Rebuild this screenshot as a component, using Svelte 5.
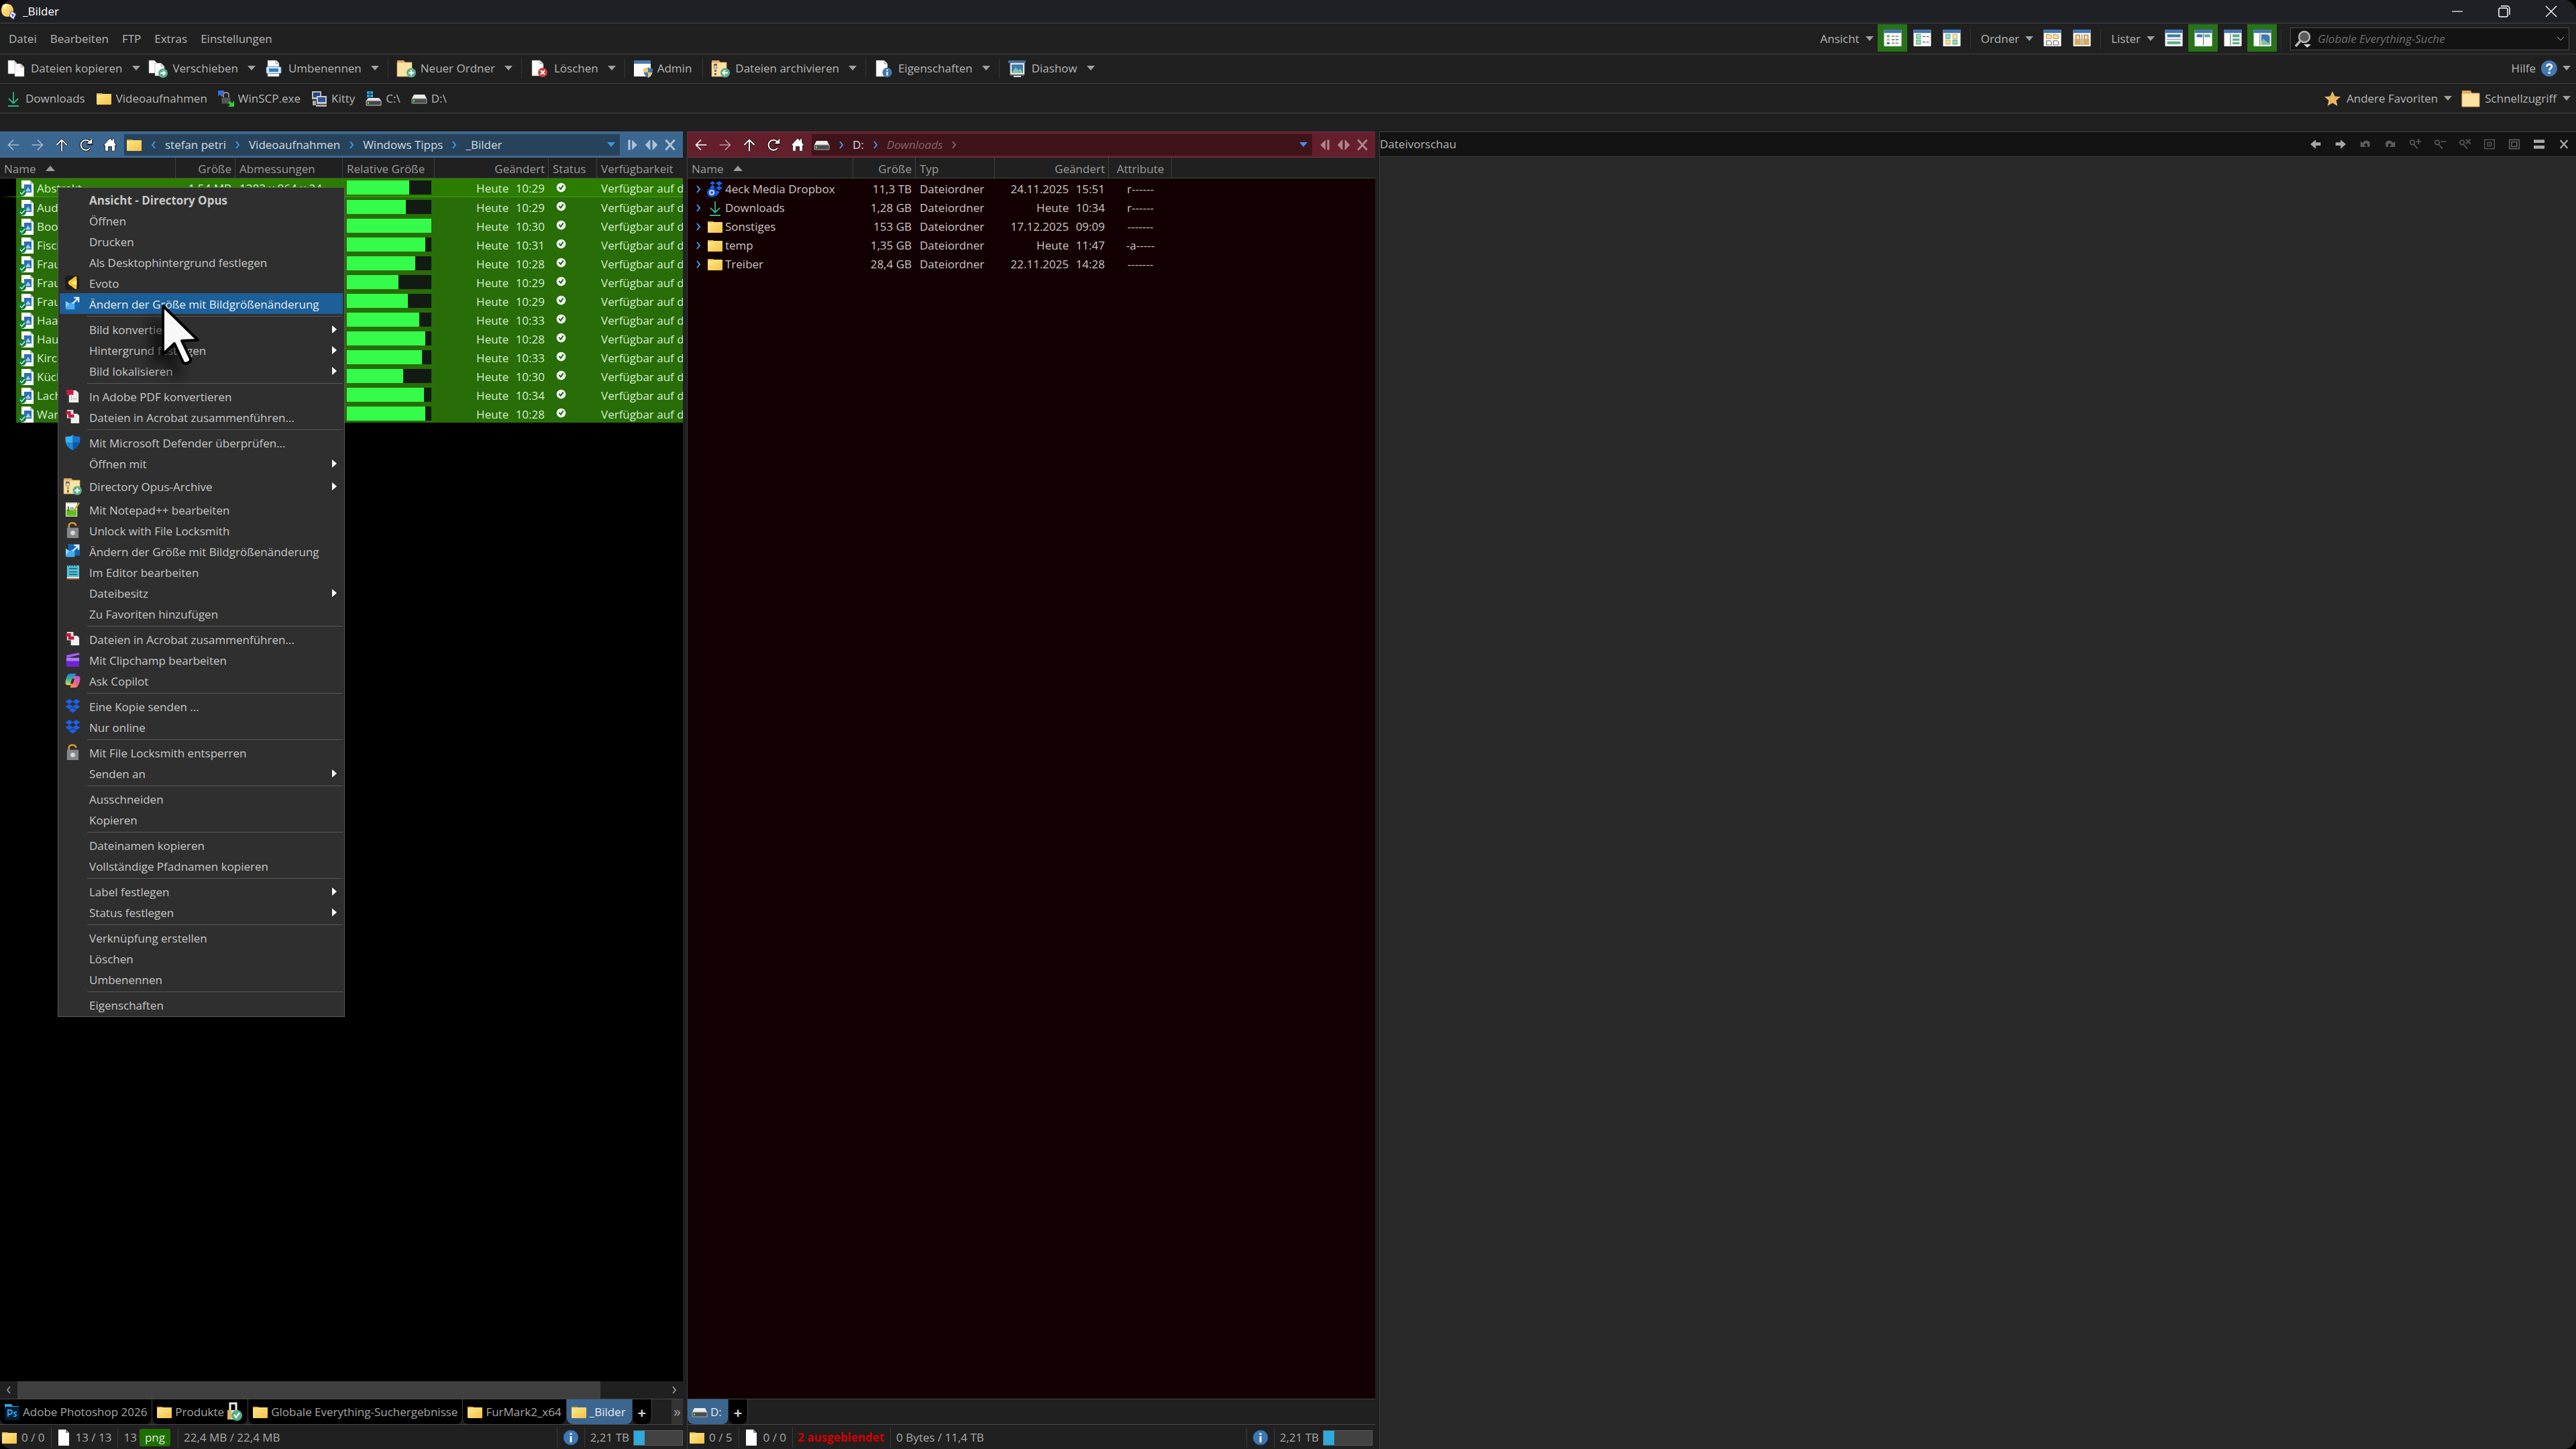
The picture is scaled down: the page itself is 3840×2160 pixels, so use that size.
<script lang="ts">
	type MenuEntry = { label: string; icon?: string; sub?: boolean; bold?: boolean; active?: boolean; tall?: boolean };
	type Tool = { label: string; icon: string; caret?: boolean; sep?: boolean };

	const page = 'fill="#fdfdfd" stroke="#8a8a8a" stroke-width=".5"';

	const icons: Record<string, string> = {
		opus: '<path d="M11 1c6 0 9 5 9 10s-3 9-9 9S2 15 2 10 5 1 11 1z" fill="url(#gold)"/><path d="M3 4c2-3 6-4 9-3L8 9z" fill="#fff2b0"/><path d="M17 11l7 5-4 8-6-5z" fill="#e8e6f6" stroke="#5b51a6"/><path d="M17 15l4 2-2 4z" fill="#5b51a6"/>',
		copy: `<path d="M0 0h9l4 4v16H0z" ${page}/><path d="M9 0v4h4" fill="#ccc"/><path d="M10 5h9l5 5v14H10z" ${page}/><path d="M19 5v5h5" fill="#ddd" stroke="#888" stroke-width=".6"/>`,
		move: `<path d="M-1 0h8l4 4v15H-1z" ${page}/><path d="M8 4h9l5 5v14H8z" ${page}/><path d="M17 4v5h5" fill="#ddd" stroke="#888" stroke-width=".6"/><circle cx="20" cy="19" r="7" fill="#5fae8b"/><path d="M16 19h7M20 16l3 3-3 3" fill="none" stroke="#fff" stroke-width="2"/>`,
		rename: `<path d="M3 0h13l4 4v20H3z" ${page}/><path d="M15 0v5h5" fill="#ddd" stroke="#777" stroke-width=".6"/><rect x="1" y="9.500" width="22" height="10" rx="1.500" fill="#d6ebfa" stroke="#5d8fb8"/><rect x="5" y="12" width="14" height="5" fill="#3f7aae"/>`,
		newfolder: '<path d="M-1 0h10l2 3h-12z" fill="#d9ab67"/><path d="M-1 3h22v21H-1z" fill="#fbe2a0" stroke="#d9ab67" stroke-width=".8"/><circle cx="20" cy="18.500" r="7" fill="#5fae8b"/><path d="M20 14.500v8M16 18.500h8" stroke="#fff" stroke-width="2.200"/>',
		remove: `<path d="M1 0h12l5 5v18H1z" ${page}/><path d="M13 0v5h5" fill="#ddd" stroke="#777" stroke-width=".6"/><circle cx="17" cy="18" r="7" fill="#c73f37"/><path d="M14 15l6 6M20 15l-6 6" stroke="#fff" stroke-width="2.200"/>`,
		admin: '<path d="M-1 0h25v24H-1z" fill="#fbfbfb"/><path d="M-1 0h25v5H-1z" fill="#4a7bb0"/><path d="M20 10c2 2 4 2 7 2 0 7-2 11-7 14-5-3-7-7-7-14 3 0 5 0 7-2z" fill="#3f78b5"/><path d="M20 10v8h-7c0-2 0-4 0-6 3 0 5 0 7-2zM20 18h6.500c-1 4-3 6-6.500 8z" fill="#efc56a"/>',
		archive: '<path d="M-1 0h11l2 3H-1z" fill="#d9ab67"/><path d="M-1 3h22v21H-1z" fill="#fbe2a0" stroke="#d9ab67" stroke-width=".8"/><path d="M2 5h5v7H2zM3 14h3v3H3zM3 19h3v3H3z" fill="#6c6456"/><path d="M3 8h3v3H3z" fill="#fff"/><circle cx="19" cy="18.500" r="7" fill="#5fae8b"/><path d="M23 18.500h-7M19 15l-3.500 3.500L19 22" fill="none" stroke="#fff" stroke-width="2"/>',
		archiveplus: '<path d="M-2 -1h12l2 3H-2z" fill="#d9ab67"/><path d="M-2 2h25v21H-2z" fill="#fbe2a0" stroke="#d9ab67" stroke-width=".8"/><path d="M1 4h6v7H1zM3 13h3v2H3zM3 17h3v4H3z" fill="#6c6456"/><path d="M2 7h4v3H2z" fill="#fff"/><circle cx="19" cy="18" r="7" fill="#5fae8b"/><path d="M19 14v8M15 18h8" stroke="#fff" stroke-width="2"/>',
		props: `<path d="M1 0h12l5 5v19H1z" ${page}/><path d="M13 0v5h5" fill="#ddd" stroke="#777" stroke-width=".6"/><circle cx="17.500" cy="18" r="7.200" fill="#4577b0"/><path d="M17.500 13.500v2M17.500 17v5.500" stroke="#fff" stroke-width="2.200"/>`,
		show: '<path d="M-1 0h26v4H-1z" fill="#3f6f9f"/><path d="M2 4h21v17H2z" fill="#fff" stroke="#9a9a9a"/><path d="M4 6h17v13H4z" fill="#3f7aae"/><path d="M4 19l6-9 4 5 3-3 4 7z" fill="#7fc4a3"/><path d="M2 21h21v2H2z" fill="#666"/><path d="M7 23h11v2H7z" fill="#ddd"/>',
		down: '<path d="M12 2v17M5 12l7 7 7-7" fill="none" stroke="#35b385" stroke-width="1.800"/><path d="M4 23h16" stroke="#35b385" stroke-width="2"/>',
		folder: '<path d="M1 4h8l2 2h12v3H1z" fill="#e0b53a"/><path d="M1 6h7l2-1h13v15a1 1 0 0 1-1 1H2a1 1 0 0 1-1-1z" fill="url(#gold)"/>',
		winscp: '<path d="M0 0h9v3L6 5l2 3-3 1-2-3-3 3z" fill="#3470d8"/><rect x="5" y="10" width="14" height="10" rx="1" fill="#555" stroke="#222"/><path d="M8 10V6c0-4 8-4 8 0v4" fill="none" stroke="#8b8b8b" stroke-width="2"/><path d="M24 15v9h-9l3-3-3-3 3-2 3 3z" fill="#2fd535"/>',
		kitty: '<rect x="1" y="1" width="14" height="12" fill="#b9bcc0"/><rect x="3" y="3" width="10" height="7" fill="#27437b"/><rect x="8" y="8" width="15" height="12" fill="#c6c9cd"/><rect x="10" y="10" width="11" height="7" fill="#2f5596"/><path d="M2 15h5v7H2zM7 21h16v3H7z" fill="#aaa"/>',
		cdrive: '<path d="M2 1h4v4H2zM7 1h4v4H7zM2 6h4v4H2zM7 6h4v4H7z" fill="#27a3e6"/><path d="M4 11h16l3 4H1z" fill="#e4e4e4"/><path d="M1 15h22v7H1z" fill="#474747" stroke="#c9c9c9"/><path d="M4 17v3" stroke="#4be04b" stroke-width="2"/>',
		drive: '<path d="M4 6h16l3 6H1z" fill="#ebebeb"/><path d="M1 12h22v7H1z" fill="#4a4f4a" stroke="#a9a9a9"/><path d="M4 14v3" stroke="#4be04b" stroke-width="2"/>',
		star: '<path d="M12 1l3.500 7.500 8.500.8-6.400 5.500L19.500 23 12 18.500 4.500 23l1.900-8.200L0 9.300l8.500-.8z" fill="#e6b562"/>',
		quick: '<path d="M-1 0h13l2 4H-1z" fill="#dca95c"/><path d="M-1 4h26v20H-1z" fill="#fde3a2" stroke="#dca95c"/>',
		help: '<circle cx="12" cy="12" r="12" fill="#4577b0"/><path d="M8.500 9.500c0-5 7.500-4.500 7.500-.5 0 3-3.800 2.800-3.800 6" fill="none" stroke="#fff" stroke-width="2.600"/><circle cx="12.200" cy="18.300" r="1.700" fill="#fff"/>',
		info: '<circle cx="12" cy="12" r="11" fill="#3f76b4" stroke="#27598f"/><circle cx="12" cy="6.500" r="1.600" fill="#fff"/><path d="M12 10v9" stroke="#fff" stroke-width="2.800"/>',
		png: '<path d="M4 0h13l5 5v19H4z" fill="#fff"/><path d="M17 0v5h5" fill="#bbb"/><path d="M8 6h11v12H8z" fill="#2d6fb5"/><path d="M9 17l5-7 4 6z" fill="#9fd0ef"/><circle cx="5" cy="17.500" r="6" fill="#157a3c"/><path d="M2 18l2.500 2.500L9 15" fill="none" stroke="#c9f5d6" stroke-width="1.500"/>',
		doc: '<path d="M4 0h11l5 5v19H4z" fill="#fff"/><path d="M15 0v5h5" fill="#8c8c8c"/>',
		ok: '<circle cx="12" cy="12" r="11" fill="#f2fbf0"/><path d="M7 11l4 5 6-9" fill="none" stroke="#1d5c14" stroke-width="3"/>',
		dropbox: '<path d="M6.500 1l6 4-6 4-6-4zM17.500 1l6 4-6 4-6-4zM6.500 9l6 4-6 4-6-4zM17.500 9l6 4-6 4-6-4zM12 14.500l6 4-6 4-6-4z" fill="#1a62ea"/>',
		dbfolder: '<path d="M8 0l4 3-4 3-4-3zM18 0l5 3-5 4-5-4zM18 7l5 3-5 4-5-4zM8 6l4 3-4 3-4-3z" fill="#1a62ea"/><circle cx="7" cy="17" r="7" fill="#1a57d6"/><path d="M14 14l5 2-6 7z" fill="#1a62ea"/><circle cx="7" cy="17" r="3" fill="none" stroke="#fff" stroke-width="1.500"/>',
		evoto: '<rect x="0" y="1" width="22" height="22" rx="4" fill="#1d1d1d"/><path d="M18 2v20c-3 0-5-2-7-4-3-2-6-3-6-6s3-4 6-6c2-2 4-4 7-4z" fill="#f8c726"/><path d="M18 8l-8 4 8 4z" fill="#fff0a8"/>',
		resize: '<path d="M5 1h18v18H5z" fill="#1464b4"/><path d="M1 8l6 4 4-3 4 4v8H2l-1-1z" fill="#46aef0"/><path d="M1 8l6 4-6 6z" fill="#8fd2fb"/><path d="M12 12l8-8M14 3h7v7" fill="none" stroke="#e8f4ff" stroke-width="2.400"/>',
		pdf: '<path d="M6 3h11l4 4v15H6z" fill="#eee"/><path d="M2 2h11v8H2z" fill="#c81845"/><path d="M10 12v6M12 16h6" stroke="#aaa"/>',
		merge: '<path d="M3 1h10v13H3z" fill="#ddd"/><path d="M9 7h10l3 3v12H9z" fill="#f1f1f1"/><path d="M1 3h8v5H1zM5 8h9v5H5z" fill="#bf1b42"/>',
		defender: '<path d="M12 0c3 3 7 3 11.500 3 .5 11-3 17-11.500 21z" fill="#1b75cc"/><path d="M12 0v24C3.500 20 0 14 .500 3 5 3 9 3 12 0z" fill="#38b4ee"/><path d="M12 12h10.700C21 18 17.500 21.500 12 24z" fill="#0d57a6"/><path d="M12 12H1.300C3 18 6.500 21.500 12 24z" fill="#1d8ad9"/>',
		npp: '<path d="M1 1h18v22H1z" fill="#f4f9ee"/><path d="M2 12h16v10H2z" fill="#62bd22"/><path d="M3 2h15" stroke="#888" stroke-dasharray="2 1"/><path d="M5 7v7M8 10h2M11 10h2" stroke="#333" stroke-width="1.500"/><path d="M21 1l2 1-8 13-2 1v-3z" fill="#c9a23c"/>',
		unlock: '<path d="M6 8V5c0-6 10-6 11 0" fill="none" stroke="#d99a2c" stroke-width="2.800"/><rect x="3" y="8" width="18" height="16" fill="#85888b"/><circle cx="12" cy="16" r="3.500" fill="#d7dadd"/>',
		editor: '<path d="M3 2h19v20H3z" fill="#5ac6d8"/><path d="M3 22h19v2H3z" fill="#a8582c"/><path d="M3 20h19v2H3z" fill="#eee"/><path d="M5 1v3M9 1v3M13 1v3M17 1v3" stroke="#1d5d72" stroke-width="1.500"/><path d="M6 7h13M6 12h13M6 16h13" stroke="#17677d" stroke-width="1.800"/>',
		clip: '<path d="M2 5l19-4 2 3-20 5z" fill="#a45df4"/><path d="M2 9h20v13a2 2 0 0 1-2 1H3l-1-2z" fill="#6d24d6"/><path d="M2 9h20v5H2z" fill="#b07bf8"/>',
		copilot: '<path d="M9 1h8l-6 18H4c-4 0-4-4-3-8C3 5 4 1 9 1z" fill="url(#cool)"/><path d="M15 23H8l6-18h6c4 0 4 4 3 8-2 6-3 10-8 10z" fill="url(#warm)"/><path d="M11 9h4l-3 8H8z" fill="#303030"/>',
		ps: '<path d="M1 0h10l2 3h9v4H1z" fill="#35a0e2"/><rect x="1" y="4" width="22" height="20" rx="2" fill="#001e36"/><path d="M6 19V9h3a3 3 0 0 1 0 6H6M19 12c-5-1-5 2-2.500 3s2.500 4-2.500 3" fill="none" stroke="#31a8ff" stroke-width="1.800"/>',
		lock: '<path d="M5 9V-1h9v10" fill="none" stroke="#eee" stroke-width="3"/><rect x="1" y="9" width="16" height="14" fill="#f3efe2"/><path d="M1 9h6v14H1z" fill="#e1b15b"/><circle cx="15" cy="17" r="8" fill="#53b188"/><path d="M11 16l3 4 5-7" fill="none" stroke="#fff" stroke-width="2.200"/>',
		v1: '<path d="M4 8h4v3H4z" fill="#5fae8b"/><path d="M4 13h4v3H4z" fill="#d3b568"/><path d="M4 18h4v3H4z" fill="#3f76ae"/><path d="M11 9.500h10M11 14.500h10M11 19.500h10" stroke="#444" stroke-dasharray="4 1.500"/>',
		v2: '<path d="M4 7h6v6H4zM4 15h6v6H4z" fill="#9cd8bd" stroke="#5fae8b"/><path d="M13 10h9M13 18h9" stroke="#444" stroke-dasharray="4 1.500"/>',
		v3: '<path d="M4 7h6v6H4zM14 15h6v6h-6z" fill="#9cd8bd" stroke="#5fae8b"/><path d="M14 7h6v6h-6zM4 15h6v6H4z" fill="#fbe2a0" stroke="#d9ab67"/>',
		o1: '<path d="M4 7h3l1 1h3v5H4zM14 7h3l1 1h3v5h-7z" fill="#fbe2a0" stroke="#c89545"/><path d="M4 16h5l2 2v4H4zM14 16h5l2 2v4h-7z" fill="#fff" stroke="#666"/>',
		o2: '<path d="M2 13h9v9H2zM14 13h9v9h-9z" fill="#dbaa5d"/><path d="M4 13V8h5v5M16 13V8h5v5" fill="none" stroke="#c58f3c" stroke-width="1.800"/><path d="M12.500 7v16" stroke="#666"/>',
		l1: '<path d="M3 7h19v4H3z" fill="#3f76ae"/><path d="M3 17h19v4H3z" fill="#5fae8b"/><path d="M2 14h21" stroke="#888"/>',
		l2: '<path d="M3 7h8v4H3z" fill="#3f76ae"/><path d="M14 7h8v4h-8z" fill="#5fae8b"/><path d="M12.500 6v16" stroke="#666"/>',
		l3: '<path d="M12 7h10v4H12zM12 13h10v3H12zM12 18h10v3H12z" fill="#5fae8b"/><path d="M9 6v17" stroke="#666"/>',
		l4: '<path d="M11 7h12v15H11z" fill="#3f76ae"/><path d="M11 22v-5l3-4 4 4 5 3v2z" fill="#7fc4a3"/><path d="M9 6v17" stroke="#666"/><path d="M19 6h4v4z" fill="#fbe2a0"/>',
		back: '<path d="M22 12H3M12 3l-9 9 9 9" fill="none" stroke="currentColor" stroke-width="2"/>',
		fwd: '<path d="M2 12h19M12 3l9 9-9 9" fill="none" stroke="currentColor" stroke-width="2"/>',
		up: '<path d="M12 23V3M3 12l9-9 9 9" fill="none" stroke="#111" stroke-width="4"/><path d="M12 23V3M3 12l9-9 9 9" fill="none" stroke="currentColor" stroke-width="2.200"/>',
		reload: '<path d="M19 18a9 9 0 1 1 1-10M22 2v8h-8" fill="none" stroke="#111" stroke-width="4.500"/><path d="M19 18a9 9 0 1 1 1-10" fill="none" stroke="currentColor" stroke-width="2.300"/><path d="M23 1v9h-9z" fill="currentColor"/>',
		home: '<path d="M12 0l4 4V1h4v7l4 5h-3v10h-6v-8H9v8H3V13H0z" fill="currentColor" stroke="#111"/>',
		single: '<path d="M4 3h4v18H4zM11 3l9 9-9 9z" fill="currentColor"/>',
		singleleft: '<path d="M20 3h-4v18h4zM13 3l-9 9 9 9z" fill="currentColor"/>',
		swap: '<path d="M10 2v20L1 12zM14 2v20l9-10z" fill="currentColor"/>',
		cross: '<path d="M4 3l16 18M20 3L4 21" stroke="currentColor" stroke-width="3.500"/>',
		pback: '<path d="M0 12L12 2v6h11v7H12v7z" fill="currentColor"/>',
		pfwd: '<path d="M24 12L12 2v6H1v7h11v7z" fill="currentColor"/>',
		undo: '<path d="M1 5v13h13l-5-5c4-5 10-2 7 5h5c6-14-8-19-16-9z" fill="currentColor"/>',
		redo: '<path d="M23 5v13H10l5-5c-4-5-10-2-7 5H3C-3 4 11-1 19 9z" fill="currentColor"/>',
		zin: '<circle cx="6" cy="8" r="5" fill="none" stroke="currentColor" stroke-width="2.500"/><path d="M9 12l9 10M14 6h12M20 0v12" stroke="currentColor" stroke-width="2.500"/>',
		zout: '<circle cx="6" cy="8" r="5" fill="none" stroke="currentColor" stroke-width="2.500"/><path d="M9 12l9 10M14 6h12" stroke="currentColor" stroke-width="2.500"/>',
		zreset: '<circle cx="6" cy="8" r="5" fill="none" stroke="currentColor" stroke-width="2.500"/><path d="M9 12l9 10M15 1l10 10M25 1L15 11" stroke="currentColor" stroke-width="2.500"/>',
		orig: '<path d="M1 2h22v20H1zM8 8h8v8H8z" fill="none" stroke="currentColor" stroke-width="2"/><path d="M11 11h2v2h-2z" fill="currentColor"/>',
		fit: '<path d="M1 2h22v20H1zM6 7h12v10H6z" fill="none" stroke="currentColor" stroke-width="2.500"/>',
		split: '<path d="M0 2h24v7H0zM0 15h24v7H0z" fill="currentColor"/>',
		find: '<circle cx="14" cy="9" r="8" fill="#5a5a5a" stroke="#b5b5b5" stroke-width="2.500"/><path d="M8 15l-7 8" stroke="#b5b5b5" stroke-width="3.500"/><path d="M13 20h11l-5.500 5z" fill="#ddd"/>',
		min: '<path d="M4 12h16" stroke="currentColor" stroke-width="1.200"/>',
		restore: '<rect x="4" y="7" width="13" height="13" rx="2" fill="none" stroke="currentColor" stroke-width="1.500"/><path d="M7 4h9a4 4 0 0 1 4 4v9" fill="none" stroke="currentColor" stroke-width="1.500"/>',
		close: '<path d="M4 4l16 16M20 4L4 20" stroke="currentColor" stroke-width="1.400"/>'
	};

	const menubar = ['Datei', 'Bearbeiten', 'FTP', 'Extras', 'Einstellungen'];

	const tools: Tool[] = [
		{ label: 'Dateien kopieren', icon: 'copy', caret: true },
		{ label: 'Verschieben', icon: 'move', caret: true },
		{ label: 'Umbenennen', icon: 'rename', caret: true, sep: true },
		{ label: 'Neuer Ordner', icon: 'newfolder', caret: true, sep: true },
		{ label: 'Löschen', icon: 'remove', caret: true, sep: true },
		{ label: 'Admin', icon: 'admin', sep: true },
		{ label: 'Dateien archivieren', icon: 'archive', caret: true, sep: true },
		{ label: 'Eigenschaften', icon: 'props', caret: true, sep: true },
		{ label: 'Diashow', icon: 'show', caret: true }
	];

	const favorites = [
		['down', 'Downloads'],
		['folder', 'Videoaufnahmen'],
		['winscp', 'WinSCP.exe'],
		['kitty', 'Kitty'],
		['cdrive', 'C:\\'],
		['drive', 'D:\\']
	];

	const viewGroups = [
		{ label: 'Ansicht', icons: ['v1', 'v2', 'v3'], on: ['v1'] },
		{ label: 'Ordner', icons: ['o1', 'o2'], on: [] as string[] },
		{ label: 'Lister', icons: ['l1', 'l2', 'l3', 'l4'], on: ['l2', 'l4'] }
	];

	const images = [
		{ name: 'Abstrakt', size: '1,54 MB', dim: '1383 x 864 x 24', rel: 74, time: '10:29' },
		{ name: 'Aud', rel: 70, time: '10:29' },
		{ name: 'Boo', rel: 100, time: '10:30' },
		{ name: 'Fisch', rel: 93, time: '10:31' },
		{ name: 'Frau', rel: 81, time: '10:28' },
		{ name: 'Frau', rel: 61, time: '10:29' },
		{ name: 'Frau', rel: 72, time: '10:29' },
		{ name: 'Haa', rel: 86, time: '10:33' },
		{ name: 'Hau', rel: 93, time: '10:28' },
		{ name: 'Kirch', rel: 89, time: '10:33' },
		{ name: 'Küch', rel: 67, time: '10:30' },
		{ name: 'Lach', rel: 91, time: '10:34' },
		{ name: 'War', rel: 93, time: '10:28' }
	];

	const folders = [
		{ name: '4eck Media Dropbox', icon: 'dbfolder', size: '11,3 TB', day: '24.11.2025', time: '15:51', attr: 'r------' },
		{ name: 'Downloads', icon: 'down', size: '1,28 GB', day: 'Heute', time: '10:34', attr: 'r------' },
		{ name: 'Sonstiges', icon: 'folder', size: '153 GB', day: '17.12.2025', time: '09:09', attr: '-------' },
		{ name: 'temp', icon: 'folder', size: '1,35 GB', day: 'Heute', time: '11:47', attr: '-a-----' },
		{ name: 'Treiber', icon: 'folder', size: '28,4 GB', day: '22.11.2025', time: '14:28', attr: '-------' }
	];

	const previewTools = ['pback', 'pfwd', 'undo', 'redo', 'zin', 'zout', 'zreset', 'orig', 'fit', 'split', 'cross'];
	const dimmed = ['undo', 'redo', 'zin', 'zout', 'zreset', 'orig', 'fit'];

	// one inner array per block between separators
	const contextMenu: MenuEntry[][] = [
		[
			{ label: 'Ansicht - Directory Opus', bold: true },
			{ label: 'Öffnen' },
			{ label: 'Drucken' },
			{ label: 'Als Desktophintergrund festlegen' },
			{ label: 'Evoto', icon: 'evoto' },
			{ label: 'Ändern der Größe mit Bildgrößenänderung', icon: 'resize', active: true }
		],
		[
			{ label: 'Bild konvertieren', sub: true },
			{ label: 'Hintergrund festlegen', sub: true },
			{ label: 'Bild lokalisieren', sub: true }
		],
		[
			{ label: 'In Adobe PDF konvertieren', icon: 'pdf' },
			{ label: 'Dateien in Acrobat zusammenführen...', icon: 'merge' }
		],
		[
			{ label: 'Mit Microsoft Defender überprüfen...', icon: 'defender' },
			{ label: 'Öffnen mit', sub: true },
			{ label: 'Directory Opus-Archive', icon: 'archiveplus', sub: true, tall: true },
			{ label: 'Mit Notepad++ bearbeiten', icon: 'npp' },
			{ label: 'Unlock with File Locksmith', icon: 'unlock' },
			{ label: 'Ändern der Größe mit Bildgrößenänderung', icon: 'resize' },
			{ label: 'Im Editor bearbeiten', icon: 'editor' },
			{ label: 'Dateibesitz', sub: true },
			{ label: 'Zu Favoriten hinzufügen' }
		],
		[
			{ label: 'Dateien in Acrobat zusammenführen...', icon: 'merge' },
			{ label: 'Mit Clipchamp bearbeiten', icon: 'clip' },
			{ label: 'Ask Copilot', icon: 'copilot' }
		],
		[
			{ label: 'Eine Kopie senden ...', icon: 'dropbox' },
			{ label: 'Nur online', icon: 'dropbox' }
		],
		[
			{ label: 'Mit File Locksmith entsperren', icon: 'unlock' },
			{ label: 'Senden an', sub: true }
		],
		[{ label: 'Ausschneiden' }, { label: 'Kopieren' }],
		[{ label: 'Dateinamen kopieren' }, { label: 'Vollständige Pfadnamen kopieren' }],
		[
			{ label: 'Label festlegen', sub: true },
			{ label: 'Status festlegen', sub: true }
		],
		[{ label: 'Verknüpfung erstellen' }, { label: 'Löschen' }, { label: 'Umbenennen' }],
		[{ label: 'Eigenschaften' }]
	];
</script>

{#snippet icon(name: string)}
	<svg class="icon" viewBox="0 0 24 24" aria-hidden="true">{@html icons[name]}</svg>
{/snippet}

{#snippet winIcon(name: string)}
	<svg class="icon" viewBox="0 0 24 24" aria-hidden="true">
		<rect width="25" height="24" rx="1" fill="#fbfbfb" />
		<path d="M0 0h25v5H0z" fill="#4577b0" />
		{@html icons[name]}
	</svg>
{/snippet}

{#snippet caret()}
	<svg class="caret" viewBox="0 0 12 7" aria-hidden="true"><path d="M0 0h12L6 7z" fill="currentColor" /></svg>
{/snippet}

{#snippet chevron(flip: boolean)}
	<svg class="chevron" viewBox="0 0 8 12" aria-hidden="true">
		<path d={flip ? 'M6 1L2 6l4 5' : 'M2 1l4 5-4 5'} fill="none" stroke="currentColor" stroke-width="2" />
	</svg>
{/snippet}

{#snippet navButtons(firstOff: boolean)}
	<div class="nav">
		<button class:off={firstOff} aria-label="Zurück">{@render icon('back')}</button>
		<button class="off" aria-label="Vor">{@render icon('fwd')}</button>
		<button aria-label="Aufwärts">{@render icon('up')}</button>
		<button aria-label="Aktualisieren">{@render icon('reload')}</button>
		<button aria-label="Start">{@render icon('home')}</button>
	</div>
{/snippet}

{#snippet freeSpace()}
	<div class="stat info">{@render icon('info')}</div>
	<div class="stat space">2,21 TB <span class="meter"><i></i></span></div>
{/snippet}

<svg class="defs" aria-hidden="true">
	<defs>
		<linearGradient id="gold" x1="0" y1="0" x2="1" y2="1">
			<stop offset="0" stop-color="#ffe88f" />
			<stop offset="1" stop-color="#f3c243" />
		</linearGradient>
		<linearGradient id="cool" x1="0" y1="0" x2="0" y2="1">
			<stop offset="0" stop-color="#2a7de8" />
			<stop offset=".5" stop-color="#37b79b" />
			<stop offset="1" stop-color="#f5d23a" />
		</linearGradient>
		<linearGradient id="warm" x1="1" y1="0" x2="0" y2="1">
			<stop offset="0" stop-color="#a35cf2" />
			<stop offset=".5" stop-color="#f0608a" />
			<stop offset="1" stop-color="#fba04a" />
		</linearGradient>
	</defs>
</svg>

<div class="app">
	<header class="title">
		{@render icon('opus')}
		<span>_Bilder</span>
		<div class="window-buttons">
			<button aria-label="Minimieren">{@render icon('min')}</button>
			<button aria-label="Wiederherstellen">{@render icon('restore')}</button>
			<button aria-label="Schließen">{@render icon('close')}</button>
		</div>
	</header>

	<div class="bar menubar">
		<nav>
			{#each menubar as entry}
				<button>{entry}</button>
			{/each}
		</nav>
		<div class="right">
			{#each viewGroups as group}
				<button class="group-label">{group.label} {@render caret()}</button>
				{#each group.icons as name}
					<button class="view" class:on={group.on.includes(name)} aria-label={group.label}>
						{@render winIcon(name)}
					</button>
				{/each}
				<span class="view-sep"></span>
			{/each}
			<label class="search">
				{@render icon('find')}
				<input type="text" placeholder="Globale Everything-Suche" aria-label="Globale Everything-Suche" />
				<svg class="expand" viewBox="0 0 12 7" aria-hidden="true"><path d="M1 1l5 5 5-5" fill="none" stroke="currentColor" /></svg>
			</label>
		</div>
	</div>

	<div class="bar toolbar">
		{#each tools as tool}
			<button class="tool" class:plain={!tool.caret}>
				{@render icon(tool.icon)}
				{tool.label}
			</button>
			{#if tool.caret}
				<button class="drop" aria-label="{tool.label} Optionen">{@render caret()}</button>
			{/if}
			{#if tool.sep}
				<span class="sep"></span>
			{/if}
		{/each}
		<div class="right help">
			<button>Hilfe {@render icon('help')} {@render caret()}</button>
		</div>
	</div>

	<div class="bar favorites">
		{#each favorites as [name, label]}
			<button>{@render icon(name)} {label}</button>
		{/each}
		<div class="right">
			<button>{@render icon('star')} Andere Favoriten {@render caret()}</button>
			<button>{@render icon('quick')} Schnellzugriff {@render caret()}</button>
		</div>
	</div>

	<div class="spacer"></div>

	<main class="panes">
		<section class="pane">
			<div class="pathbar">
				{@render navButtons(true)}
				<div class="address">
					{@render icon('folder')}
					{@render chevron(true)}
					<a href="#petri">stefan petri</a>
					{@render chevron(false)}
					<a href="#video">Videoaufnahmen</a>
					{@render chevron(false)}
					<a href="#tipps">Windows Tipps</a>
					{@render chevron(false)}
					<a href="#bilder">_Bilder</a>
					{@render caret()}
				</div>
				<div class="pane-buttons">
					<button aria-label="Einzeln">{@render icon('single')}</button>
					<button aria-label="Tauschen">{@render icon('swap')}</button>
					<button aria-label="Schließen">{@render icon('cross')}</button>
				</div>
			</div>
			<div class="files">
				<table>
					<colgroup>
						<col class="l-name" /><col class="l-size" /><col class="l-dim" /><col class="l-rel" />
						<col class="date" /><col class="l-status" /><col />
					</colgroup>
					<thead>
						<tr>
							<th>Name <svg class="sort" viewBox="0 0 14 8" aria-hidden="true"><path d="M0 8h14L7 0z" fill="currentColor" /></svg></th>
							<th class="num">Größe</th>
							<th>Abmessungen</th>
							<th>Relative Größe</th>
							<th class="num">Geändert</th>
							<th>Status</th>
							<th>Verfügbarkeit</th>
						</tr>
					</thead>
					<tbody class="selected">
						{#each images as img}
							<tr>
								<td class="name"><span>{@render icon('png')} {img.name}</span></td>
								<td class="num">{img.size ?? ''}</td>
								<td>{img.dim ?? ''}</td>
								<td><div class="rel"><i style="width: {img.rel}%"></i></div></td>
								<td class="num">Heute <span class="time">{img.time}</span></td>
								<td class="status">{@render icon('ok')}</td>
								<td class="avail">Verfügbar auf d</td>
							</tr>
						{/each}
					</tbody>
				</table>
			</div>
			<div class="scrollbar">
				{@render chevron(true)}
				<div class="track"><div class="thumb"></div></div>
				{@render chevron(false)}
			</div>
			<div class="tabs">
				<button>{@render icon('ps')} Adobe Photoshop 2026</button>
				<button>{@render icon('folder')} Produkte {@render icon('lock')}</button>
				<button>{@render icon('folder')} Globale Everything-Suchergebnisse</button>
				<button>{@render icon('folder')} FurMark2_x64</button>
				<button class="current">{@render icon('folder')} _Bilder</button>
				<button class="add">+</button>
				<button class="more">»</button>
			</div>
			<footer>
				<div class="stat">{@render icon('folder')} 0 / 0</div>
				<div class="stat">{@render icon('doc')} 13 / 13</div>
				<div class="stat tight">13 <span class="chip">png</span></div>
				<div class="stat last">22,4 MB / 22,4 MB</div>
				{@render freeSpace()}
			</footer>
		</section>

		<section class="pane target">
			<div class="pathbar">
				{@render navButtons(false)}
				<div class="address">
					{@render icon('drive')}
					{@render chevron(false)}
					<a href="#d">D:</a>
					{@render chevron(false)}
					<a href="#downloads" class="ghost">Downloads</a>
					<span class="ghost">{@render chevron(false)}</span>
					{@render caret()}
				</div>
				<div class="pane-buttons">
					<button aria-label="Einzeln">{@render icon('singleleft')}</button>
					<button aria-label="Tauschen">{@render icon('swap')}</button>
					<button aria-label="Schließen">{@render icon('cross')}</button>
				</div>
			</div>
			<div class="files">
				<table>
					<colgroup>
						<col class="r-name" /><col class="r-size" /><col class="r-type" />
						<col class="date" /><col class="r-attr" /><col />
					</colgroup>
					<thead>
						<tr>
							<th>Name <svg class="sort" viewBox="0 0 14 8" aria-hidden="true"><path d="M0 8h14L7 0z" fill="currentColor" /></svg></th>
							<th class="num">Größe</th>
							<th>Typ</th>
							<th class="num">Geändert</th>
							<th class="mid">Attribute</th>
							<th></th>
						</tr>
					</thead>
					<tbody>
						{#each folders as f}
							<tr>
								<td class="name"><span>{@render chevron(false)} {@render icon(f.icon)} {f.name}</span></td>
								<td class="num">{f.size}</td>
								<td>Dateiordner</td>
								<td class="num">{f.day} <span class="time">{f.time}</span></td>
								<td class="mid">{f.attr}</td>
								<td></td>
							</tr>
						{/each}
					</tbody>
				</table>
			</div>
			<div class="tabs">
				<button class="current">{@render icon('drive')} D:</button>
				<button class="add">+</button>
			</div>
			<footer>
				<div class="stat">{@render icon('folder')} 0 / 5</div>
				<div class="stat">{@render icon('doc')} 0 / 0</div>
				<div class="stat hidden-count">2 ausgeblendet</div>
				<div class="stat last">0 Bytes / 11,4 TB</div>
				{@render freeSpace()}
			</footer>
		</section>

		<section class="preview">
			<div class="preview-bar">
				<span>Dateivorschau</span>
				<div class="preview-tools">
					{#each previewTools as name}
						<button class:dim={dimmed.includes(name)} aria-label={name}>{@render icon(name)}</button>
					{/each}
				</div>
			</div>
		</section>
	</main>

	<ul class="context" role="menu">
		{#each contextMenu as block}
			{#each block as entry, i}
				<li class:divided={i === 0 && block !== contextMenu[0]}>
					<button role="menuitem" class:active={entry.active} class:bold={entry.bold} class:tall={entry.tall}>
						<span class="slot">{#if entry.icon}{@render icon(entry.icon)}{/if}</span>
						<span class="text">{entry.label}</span>
						{#if entry.sub}
							<svg class="arrow" viewBox="0 0 7 12" aria-hidden="true"><path d="M0 0l7 6-7 6z" fill="#fff" /></svg>
						{/if}
					</button>
				</li>
			{/each}
		{/each}
	</ul>

	<svg class="cursor" viewBox="0 0 60 94" aria-hidden="true">
		<path d="M4 4v72l17-16 13 28c2 4 13 0 11-5L32 56l24-1z" fill="#f8f8f8" stroke="#000" stroke-width="4" stroke-linejoin="round" />
	</svg>
</div>

<style>
	:global(body) {
		background: #000;
	}

	.defs {
		position: absolute;
		width: 0;
		height: 0;
	}

	.app {
		position: relative;
		display: flex;
		flex-direction: column;
		min-height: 100vh;
		background: #202020;
		border-radius: 18px;
		overflow: hidden;
		color: #b6b6b6;
		font-family: 'Open Sans', 'Noto Sans', sans-serif;
		font-size: 17px;
		line-height: 24px;
		white-space: nowrap;
	}

	button,
	input {
		font: inherit;
		color: inherit;
		background: none;
		border: 0;
		padding: 0;
		margin: 0;
		white-space: nowrap;
	}

	a {
		color: inherit;
		text-decoration: none;
	}

	.icon {
		flex: none;
		display: block;
		width: 24px;
		height: 24px;
		overflow: visible;
	}

	.caret {
		flex: none;
		width: 12px;
		height: 7px;
		color: #a0a0a0;
	}

	.chevron {
		flex: none;
		width: 8px;
		height: 12px;
	}

	/* window title */
	.title {
		display: flex;
		align-items: center;
		gap: 10px;
		height: 34px;
		background: #1e2025;
		border-bottom: 1px solid #454545;
		color: #fff;
	}

	.window-buttons {
		display: flex;
		margin-left: auto;
		padding-right: 2px;
	}

	.window-buttons button {
		display: flex;
		justify-content: center;
		width: 70px;
	}

	/* toolbars */
	.bar {
		display: flex;
		align-items: center;
		height: 43px;
		border-bottom: 1px solid #414141;
	}

	.bar .right {
		display: flex;
		align-items: center;
		margin-left: auto;
		padding-right: 8px;
	}

	.bar.menubar {
		height: 45px;
	}

	.menubar nav {
		display: flex;
		gap: 20px;
		padding-left: 13px;
	}

	.group-label {
		display: flex;
		align-items: center;
		gap: 9px;
		padding-right: 6px;
	}

	.view {
		display: flex;
		align-items: center;
		justify-content: center;
		width: 44px;
		height: 41px;
		margin-bottom: 2px;
	}

	.view .icon {
		width: 26px;
		height: 25px;
	}

	.view.on {
		background: #28721a;
	}

	.view-sep {
		width: 1px;
		height: 30px;
		margin: 0 15px 0 6px;
		background: #333;
	}

	.view-sep:last-of-type {
		margin-right: 13px;
	}

	.search {
		display: flex;
		align-items: center;
		gap: 10px;
		box-sizing: border-box;
		width: 416px;
		height: 34px;
		margin-right: 2px;
		padding: 0 6px;
		background: #131313;
		border: 1px solid #484848;
	}

	.search input {
		flex: 1;
		min-width: 0;
	}

	.search input::placeholder {
		color: #707070;
		font-style: italic;
		opacity: 1;
	}

	.expand {
		width: 12px;
		height: 7px;
	}

	.bar.toolbar {
		height: 41px;
		padding: 0 0 2px 12px;
	}

	.tool {
		display: flex;
		align-items: center;
		gap: 10px;
	}

	.tool.plain {
		padding-right: 18px;
	}

	.drop {
		display: flex;
		justify-content: center;
		width: 41px;
	}

	.sep {
		width: 1px;
		height: 30px;
		margin: 0 14px 0 -2px;
		background: #363636;
	}

	.help button {
		display: flex;
		align-items: center;
		gap: 8px;
	}

	.favorites button {
		display: flex;
		align-items: center;
		gap: 6px;
		margin-right: 16px;
	}

	.favorites {
		padding-left: 8px;
	}

	.favorites .right button {
		gap: 9px;
		margin-right: 16px;
	}

	.favorites .right button:last-child {
		margin-right: 0;
	}

	.spacer {
		height: 27px;
	}

	/* panes */
	.panes {
		flex: 1;
		display: grid;
		grid-template-columns: minmax(0, 1018fr) minmax(0, 1026fr) minmax(0, 1784fr);
		gap: 6px;
	}

	.pane {
		display: flex;
		flex-direction: column;
		--accent: #3b6690;
		--field: #27435b;
		--list: #000;
		--edge: #4d7396;
	}

	.pane.target {
		border-left: 1px solid #3c3c3c;
		--accent: #641f2c;
		--field: #3f131a;
		--list: #130002;
		--edge: #6b3540;
	}

	.pathbar {
		display: flex;
		align-items: center;
		height: 37px;
		background: var(--accent);
		border-top: 1px solid var(--edge);
		border-bottom: 1px solid var(--edge);
		color: #fff;
	}

	.nav {
		display: flex;
		padding: 0 3px 0 2px;
	}

	.nav button {
		display: flex;
		justify-content: center;
		width: 36px;
	}

	.nav .icon {
		width: 20px;
		height: 20px;
	}

	.off {
		opacity: 0.55;
	}

	.address {
		flex: 1;
		display: flex;
		align-items: center;
		height: 32px;
		padding: 0 7px 0 3px;
		background: var(--field);
		color: #d4dbe2;
	}

	.address .chevron {
		padding: 0 13px;
		color: #3f96ea;
	}

	.address .caret {
		margin-left: auto;
		color: #3f96ea;
	}

	.address .ghost,
	.address .ghost .chevron {
		color: #80666a;
		font-style: italic;
	}

	.pane-buttons {
		display: flex;
		padding: 0 5px;
	}

	.pane-buttons button {
		display: flex;
		justify-content: center;
		width: 28px;
		color: #adc4d8;
	}

	.target .pane-buttons button {
		color: #b0868d;
	}

	.pane-buttons .icon {
		width: 20px;
		height: 20px;
	}

	.files {
		flex: 1;
		overflow: hidden;
		background: var(--list);
	}

	table {
		width: 100%;
		table-layout: fixed;
		border-spacing: 0;
	}

	.l-name {
		width: 262px;
	}

	.l-size {
		width: 89px;
	}

	.l-dim {
		width: 160px;
	}

	.l-rel {
		width: 137px;
	}

	.date {
		width: 170px;
	}

	.l-status {
		width: 72px;
	}

	.r-name {
		width: 247px;
	}

	.r-size {
		width: 93px;
	}

	.r-type {
		width: 118px;
	}

	.r-attr {
		width: 94px;
	}

	th {
		height: 31px;
		padding: 3px 5px 0 6px;
		box-sizing: border-box;
		background: #202020;
		border-right: 1px solid #3f3f3f;
		border-bottom: 1px solid #454545;
		color: #9c9c9c;
		font-weight: 400;
		text-align: left;
	}

	th:last-child {
		border-right: 0;
	}

	.sort {
		width: 14px;
		height: 8px;
		margin: 0 0 3px 10px;
	}

	td {
		height: 28px;
		padding: 3px 6px 0;
		box-sizing: border-box;
		overflow: hidden;
		color: #cfc5c5;
	}

	th.num,
	td.num {
		text-align: right;
	}

	th.mid,
	td.mid {
		text-align: center;
	}

	td.avail {
		padding-right: 0;
	}

	.time {
		margin-left: 6px;
	}

	.selected tr {
		background: #286d08;
	}

	.selected td {
		color: #d6f0cb;
	}

	.selected tr:first-child {
		background: #2c7c02;
	}

	.selected tr:first-child td {
		border-bottom: 1px solid #469c16;
	}

	td.name {
		padding-left: 12px;
	}

	.selected td.name {
		padding-left: 4px;
		border-left: 24px solid #000;
	}

	.name span {
		display: flex;
		align-items: center;
		gap: 3px;
	}

	.name .chevron {
		margin-right: 6px;
		color: #4a9df0;
	}

	.rel {
		height: 21px;
		margin: 0 -1px 3px 0;
		background: #111b13;
	}

	.rel i {
		display: block;
		height: 100%;
		background: #35fb4a;
	}

	.status .icon {
		width: 15px;
		height: 15px;
		margin: 0 5px 4px;
	}

	.scrollbar {
		display: flex;
		align-items: center;
		gap: 9px;
		height: 26px;
		padding: 0 9px;
		color: #8c8c8c;
	}

	.track {
		flex: 1;
		height: 100%;
	}

	.thumb {
		width: 90%;
		height: 100%;
		background: #404040;
	}

	.tabs {
		display: flex;
		height: 37px;
		border-top: 1px solid #484848;
		border-bottom: 1px solid #484848;
	}

	.tabs button {
		display: flex;
		align-items: center;
		gap: 4px;
		padding: 0 7px 0 6px;
		background: #000;
		border-right: 1px solid #444;
		border-radius: 0 0 9px 9px;
		color: #a6a6a6;
	}

	.tabs .current {
		padding-right: 9px;
		background: #3b6690;
		color: #e4ebf2;
	}

	.tabs .add {
		padding: 0 8px;
		font-size: 22px;
		font-weight: 700;
		color: #d0d0d0;
	}

	.tabs .more {
		margin-left: auto;
		padding: 0 3px 4px;
		background: #343434;
		border: 0;
		border-radius: 0;
		font-size: 22px;
	}

	footer {
		display: flex;
		align-items: center;
		height: 34px;
		padding-top: 2px;
		color: #a8a8a8;
	}

	.stat {
		display: flex;
		align-items: center;
		gap: 6px;
		height: 30px;
		padding: 0 9px 0 6px;
		border-right: 1px solid #3a3a3a;
	}

	.stat:first-child {
		padding-left: 2px;
	}

	.stat.tight {
		gap: 4px;
		padding: 0 11px 0 8px;
	}

	.chip {
		padding: 1px 8px;
		background: #1f6f00;
		border-radius: 3px;
		color: #dcead8;
	}

	.stat.hidden-count {
		padding-left: 7px;
		color: #d00000;
		font-weight: 700;
	}

	.stat.last {
		flex: 1;
		padding-left: 8px;
	}

	.stat.info {
		padding: 0 8px;
	}

	.stat.space {
		padding: 0 0 0 8px;
		border: 0;
	}

	.target .stat.space {
		padding-right: 4px;
	}

	.meter {
		box-sizing: border-box;
		width: 74px;
		height: 23px;
		background: #424242;
		border: 1px solid #5d5d5d;
	}

	.meter i {
		display: block;
		width: 22%;
		height: 100%;
		background: #30a9dc;
	}

	.preview {
		background: #282828;
		border-left: 1px solid #3a3a3a;
	}

	.preview-bar {
		display: flex;
		align-items: center;
		justify-content: space-between;
		height: 36px;
		background: #131313;
		border-top: 1px solid #404040;
		border-bottom: 1px solid #404040;
	}

	.preview-tools {
		display: flex;
	}

	.preview-tools button {
		display: flex;
		justify-content: center;
		width: 37px;
		color: #a8a8a8;
	}

	.preview-tools .dim {
		color: #5c5c5c;
	}

	.preview-tools .icon {
		width: 16px;
		height: 16px;
	}

	/* context menu and pointer float above the file list */
	.context {
		position: absolute;
		top: 279px;
		left: 86px;
		box-sizing: border-box;
		width: 428px;
		margin: 0;
		padding: 2px;
		list-style: none;
		background: #2f2f2f;
		border: 1px solid #5a5a5a;
		color: #c8c8c8;
	}

	.context button {
		display: flex;
		align-items: center;
		width: 100%;
		height: 31px;
		padding-right: 9px;
	}

	.context .tall {
		height: 38px;
	}

	.context .active {
		background: #1d5f98;
		color: #e6eef5;
	}

	.context .bold {
		font-weight: 700;
	}

	.divided::before {
		content: '';
		display: block;
		height: 1px;
		margin: 3px 0 3px 41px;
		background: #575757;
	}

	.slot {
		width: 36px;
		padding-left: 8px;
	}

	.slot .icon {
		width: 23px;
		height: 23px;
	}

	.text {
		flex: 1;
		padding-top: 2px;
		text-align: left;
	}

	.arrow {
		width: 7px;
		height: 12px;
	}

	.cursor {
		position: absolute;
		top: 452px;
		left: 239px;
		width: 60px;
		height: 94px;
		filter: drop-shadow(-16px 18px 9px rgba(0, 0, 0, 0.6));
	}
</style>
